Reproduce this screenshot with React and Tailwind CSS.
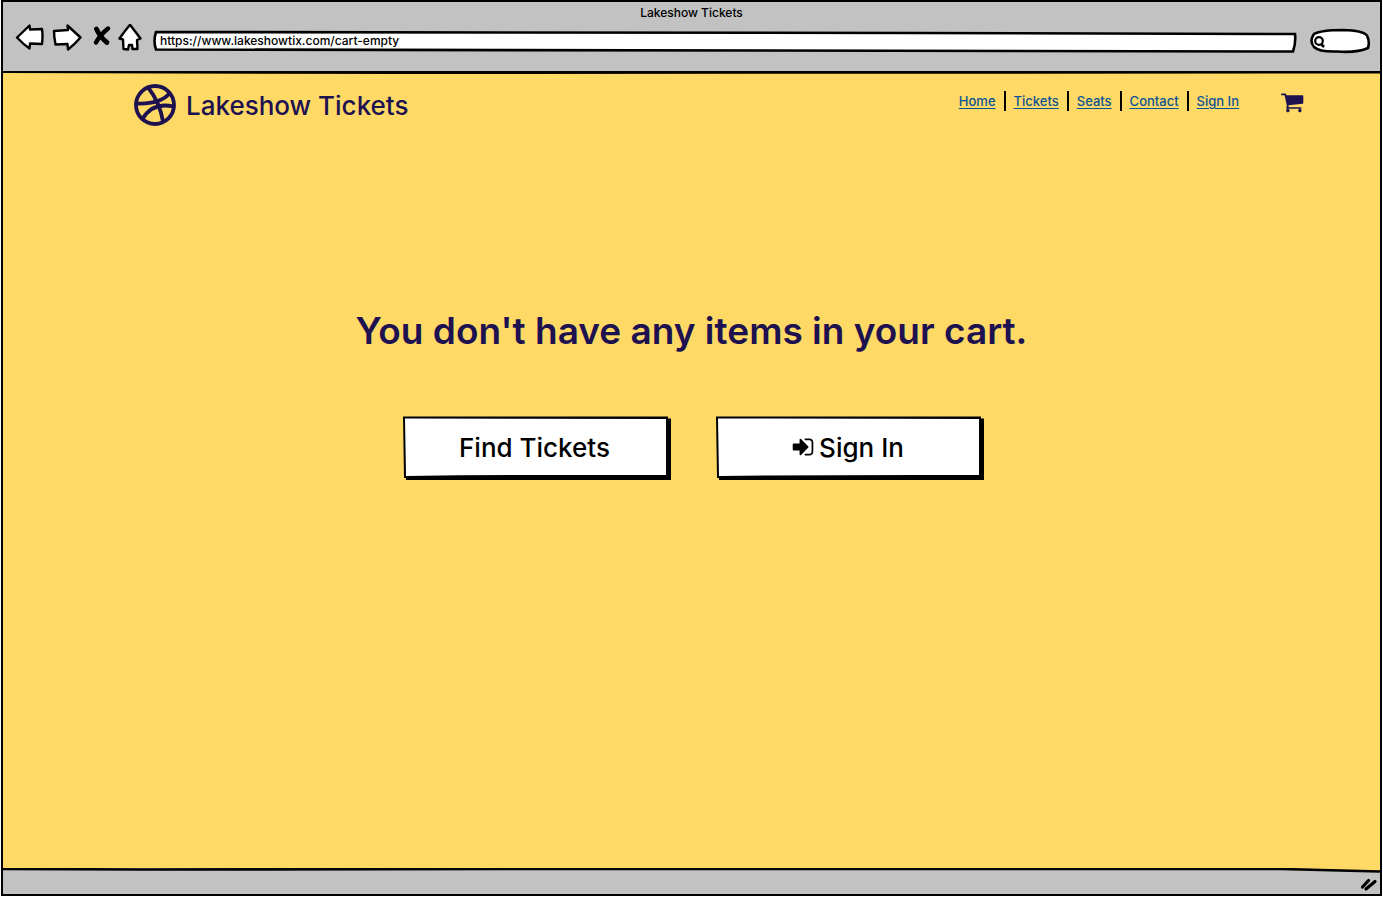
import React from "react";

const INK = "#1d1150";

function BallIcon() {
  return (
    <svg viewBox="0 0 42 42" className="size-[42px] shrink-0" fill="none" stroke={INK} strokeWidth="3.8" strokeLinecap="round" aria-hidden="true">
      <circle cx="21" cy="21" r="19" />
      <path d="M14.500 4C20 11 26.500 23 29 37.500" />
      <path d="M2.500 19.500C15 20 28 18 35.500 9.500" />
      <path d="M8.500 35C15 24 26 19.500 39.500 22.500" />
    </svg>
  );
}

function CartIcon() {
  return (
    <svg viewBox="0 0 1792 1792" className="size-6" fill={INK} aria-hidden="true">
      <path d="M640 1536q0 52-38 90t-90 38-90-38-38-90 38-90 90-38 90 38 38 90zm896 0q0 52-38 90t-90 38-90-38-38-90 38-90 90-38 90 38 38 90zm128-1088v512q0 24-16.500 42.500t-40.500 21.500l-1044 122q13 60 13 70 0 16-24 64h920q26 0 45 19t19 45-19 45-45 19h-1024q-26 0-45-19t-19-45q0-11 8-31.500t16-36 21.500-40 15.500-29.500l-177-823h-204q-26 0-45-19t-19-45 19-45 45-19h256q16 0 28.500 6.500t19.500 15.500 13 24.500 8 26 5.500 29.500 4.500 26h1201q26 0 45 19t19 45z" />
    </svg>
  );
}

function SignInIcon() {
  return (
    <svg viewBox="0 0 1792 1792" className="size-6" fill="currentColor" aria-hidden="true">
      <path d="M1312 896q0 26-19 45l-544 544q-19 19-45 19t-45-19-19-45v-288h-448q-26 0-45-19t-19-45v-384q0-26 19-45t45-19h448v-288q0-26 19-45t45-19 45 19l544 544q19 19 19 45zm352-352v704q0 119-84.500 203.500t-203.500 84.500h-320q-13 0-22.500-9.500t-9.500-22.500q0-4-1-20t-.5-26.500 3-23.500 10-19.500 20.500-6.500h320q66 0 113-47t47-113v-704q0-66-47-113t-113-47h-312l-11.500-1-11.500-3-8-5.500-7-9-2-13.500q0-4-1-20t-.5-26.500 3-23.500 10-19.500 20.500-6.500h320q119 0 203.500 84.500t84.500 203.500z" />
    </svg>
  );
}

function BrowserBar() {
  return (
    <header className="flex h-[70px] flex-col bg-[#c2c2c2]">
      <h2 className="text-center text-xs leading-[22px] font-medium text-black">Lakeshow Tickets</h2>
      <div className="flex items-start pr-[9px] pl-3">
        <button type="button" aria-label="Back" className="h-8 w-8">
          <svg viewBox="0 0 32 32" className="size-8" fill="#fff" stroke="#000" strokeWidth="2.400" strokeLinejoin="round">
            <path d="M2 13.500L14.500 1.500L15 5.500L27 5Q28 12 27 20L15 19.500L14.500 24.500Q8 20 2 13.500Z" />
          </svg>
        </button>
        <button type="button" aria-label="Forward" className="ml-1 h-8 w-8">
          <svg viewBox="0 0 32 32" className="size-8" fill="#fff" stroke="#000" strokeWidth="2.400" strokeLinejoin="round">
            <path d="M29.500 13.500L16.500 1.500L17 6L3 7Q3 13 4.500 20.500L16.500 20L17 25.500Q24 20 29.500 13.500Z" />
          </svg>
        </button>
        <button type="button" aria-label="Stop" className="ml-2 h-8 w-5">
          <svg viewBox="0 0 20 32" className="h-8 w-5" fill="none" stroke="#000" strokeLinecap="round">
            <path d="M5.500 5Q9 13 16 18.500" strokeWidth="4.800" />
            <path d="M17 4.500Q9 11 5 18.500" strokeWidth="4.400" />
          </svg>
        </button>
        <button type="button" aria-label="Home" className="ml-[7px] h-8 w-6">
          <svg viewBox="0 0 24 32" className="h-8 w-6" fill="#fff" stroke="#000" strokeWidth="2.400" strokeLinejoin="round">
            <path d="M12 0.800L22.500 14.500L19 16L19.500 25L14.500 25L14 21L11 21L10 25.500L5.500 25L5 15.500L1.500 14.500Q6 8 12 0.800Z" />
          </svg>
        </button>
        <div className="relative mt-[5px] ml-[11px] h-6 flex-1">
          <svg viewBox="0 0 1144 24" preserveAspectRatio="none" className="absolute inset-0 h-full w-full" fill="#fff" stroke="#000" strokeWidth="2.600" aria-hidden="true">
            <path d="M3 3Q500 2 760 4L1142 5Q1143 14 1140 22.500Q570 22 3 20.500Q0 12 3 3Z" />
          </svg>
          <input aria-label="Address" defaultValue="https://www.lakeshowtix.com/cart-empty" className="relative block h-[22px] w-full bg-transparent pl-[7px] text-xs font-medium text-black outline-none" />
        </div>
        <div className="relative mt-[3px] ml-3 h-7 w-[62px]">
          <svg viewBox="0 0 62 28" className="absolute inset-0 h-full w-full" fill="#fff" stroke="#000" strokeWidth="2.600" aria-hidden="true">
            <path d="M5 7Q12 3 34 3Q54 3.500 58 8.500Q61 15 59 21Q48 26 28 24.500Q10 25 5 20Q0 14 5 7Z" />
            <circle cx="10" cy="14" r="3.800" strokeWidth="2.200" />
            <path d="M12 17L15 20" strokeWidth="2.600" />
          </svg>
          <input aria-label="Search" className="relative h-7 w-full bg-transparent pr-2 pl-5 text-xs outline-none" />
        </div>
      </div>
    </header>
  );
}

const links = [
  { label: "Home", href: "#home" },
  { label: "Tickets", href: "#tickets" },
  { label: "Seats", href: "#seats" },
  { label: "Contact", href: "#contact" },
  { label: "Sign In", href: "#sign-in" },
];

function SketchButton({ children }) {
  return (
    <button type="button" className="relative flex h-16 w-[268px] items-center justify-center pr-1 pb-0.5 text-[26px] font-medium text-black">
      <svg viewBox="0 0 268 64" className="absolute inset-0 h-full w-full" aria-hidden="true">
        <path d="M0 0.500H265V2.500H268V64H3V62H1Z" fill="#000" />
        <path d="M2 2.500L263 3V59Q130 58.500 3 60Z" fill="#fff" />
      </svg>
      <span className="relative flex items-center gap-1">{children}</span>
    </button>
  );
}

export default function App() {
  return (
    <div className="min-h-screen bg-white px-px font-['Inter',sans-serif]">
      <div className="flex min-h-[896px] flex-col border-2 border-black bg-[#ffd966]">
        <BrowserBar />
        <svg viewBox="0 0 1379 3" preserveAspectRatio="none" className="-mt-px h-[3px] w-full" aria-hidden="true">
          <path d="M0 0H1379V2.500L400 3L0 2Z" />
        </svg>
        <div className="flex items-start justify-between pt-2.5 pr-[75px] pl-[131px]">
          <a href="#home" className="flex items-center gap-2.5 text-[26px] leading-10 font-medium text-[#1d1150]">
            <BallIcon />
            <span className="pt-0.5">Lakeshow Tickets</span>
          </a>
          <div className="flex items-center pt-1">
            <nav className="flex h-5 items-center divide-x-2 divide-black text-[13px] leading-5 font-medium text-[#0b5394]">
              {links.map(({ label, href }) => (
                <a key={label} href={href} className="px-2 underline underline-offset-2">
                  {label}
                </a>
              ))}
            </nav>
            <a href="#cart" aria-label="Cart" className="ml-[34px] pt-0.5">
              <CartIcon />
            </a>
          </div>
        </div>
        <main className="flex flex-1 flex-col items-center pt-[174px]">
          <h1 className="text-[37px] leading-[62px] font-semibold text-[#1d1150]">You don't have any items in your cart.</h1>
          <div className="mt-[54px] flex gap-[45px] pl-[3px]">
            <SketchButton>Find Tickets</SketchButton>
            <SketchButton>
              <SignInIcon />
              Sign In
            </SketchButton>
          </div>
        </main>
        <footer className="relative h-[26px] bg-[#c2c2c2]">
          <svg viewBox="0 0 1379 26" preserveAspectRatio="none" className="absolute inset-0 h-full w-full" aria-hidden="true">
            <path d="M1280 0H1379V3Z" fill="#ffd966" />
            <path d="M0 1L140 1.500L500 1H1280L1379 3.500" fill="none" stroke="#000" strokeWidth="2.600" />
          </svg>
          <svg viewBox="0 0 18 16" className="absolute right-0.5 bottom-0.5 h-4 w-[18px]" stroke="#000" strokeWidth="3.2" strokeLinecap="round" aria-hidden="true">
            <path d="M2.500 11L8.500 4.500M6 13L15 5.500" />
          </svg>
        </footer>
      </div>
    </div>
  );
}
